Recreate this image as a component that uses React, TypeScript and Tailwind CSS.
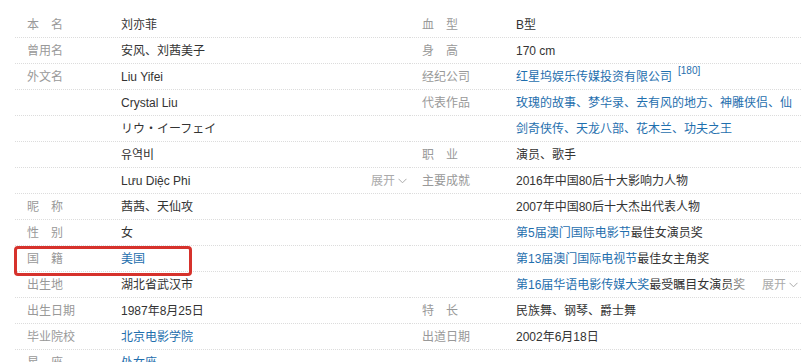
import React from 'react';

type Part = { text: string; link?: boolean };
type Row = { label?: string; value: Part[]; sup?: string; more?: boolean; boxed?: boolean };

const leftRows: Row[] = [
  { label: '本　名', value: [{ text: '刘亦菲' }] },
  { label: '曾用名', value: [{ text: '安风、刘茜美子' }] },
  { label: '外文名', value: [{ text: 'Liu Yifei' }] },
  { value: [{ text: 'Crystal Liu' }] },
  { value: [{ text: 'リウ・イーフェイ' }] },
  { value: [{ text: '유역비' }] },
  { value: [{ text: 'Lưu Diệc Phi' }], more: true },
  { label: '昵　称', value: [{ text: '茜茜、天仙攻' }] },
  { label: '性　别', value: [{ text: '女' }] },
  { label: '国　籍', value: [{ text: '美国', link: true }], boxed: true },
  { label: '出生地', value: [{ text: '湖北省武汉市' }] },
  { label: '出生日期', value: [{ text: '1987年8月25日' }] },
  { label: '毕业院校', value: [{ text: '北京电影学院', link: true }] },
  { label: '星　座', value: [{ text: '处女座', link: true }] },
];

const rightRows: Row[] = [
  { label: '血　型', value: [{ text: 'B型' }] },
  { label: '身　高', value: [{ text: '170 cm' }] },
  { label: '经纪公司', value: [{ text: '红星坞娱乐传媒投资有限公司', link: true }], sup: '[180]' },
  { label: '代表作品', value: [{ text: '玫瑰的故事、梦华录、去有风的地方、神雕侠侣、仙', link: true }] },
  { value: [{ text: '剑奇侠传、天龙八部、花木兰、功夫之王', link: true }] },
  { label: '职　业', value: [{ text: '演员、歌手' }] },
  { label: '主要成就', value: [{ text: '2016年中国80后十大影响力人物' }] },
  { value: [{ text: '2007年中国80后十大杰出代表人物' }] },
  { value: [{ text: '第5届澳门国际电影节', link: true }, { text: '最佳女演员奖' }] },
  { value: [{ text: '第13届澳门国际电视节', link: true }, { text: '最佳女主角奖' }] },
  { value: [{ text: '第16届华语电影传媒大奖', link: true }, { text: '最受瞩目女演员奖' }], more: true },
  { label: '特　长', value: [{ text: '民族舞、钢琴、爵士舞' }] },
  { label: '出道日期', value: [{ text: '2002年6月18日' }] },
];

const Chevron = () => (
  <svg width="9" height="6" viewBox="0 0 9 6" className="ml-[3px] mt-[1px]">
    <polyline points="0.5,0.8 4.5,4.8 8.5,0.8" fill="none" stroke="#aaa" strokeWidth="1" />
  </svg>
);

const InfoRow = ({ row }: { row: Row }) => (
  <div className="relative flex items-center h-[26px] border-b border-dotted border-[#dcdcdc] whitespace-nowrap">
    <div className="w-[106px] shrink-0 pl-[12px] text-[#999]">{row.label}</div>
    <div className="flex items-center text-[#333]">
      {row.value.map((p, i) => (
        <span key={i} className={p.link ? 'text-[#1f6fae]' : ''}>{p.text}</span>
      ))}
      {row.sup && <span className="relative -top-[6px] ml-[6px] text-[10px] text-[#1f6fae]">{row.sup}</span>}
    </div>
    {row.more && (
      <div className="absolute right-0 top-0 h-full flex items-center">
        <div className="h-full w-[36px] bg-gradient-to-r from-white/0 to-white" />
        <div className="h-full flex items-center bg-white pl-[2px] pr-[3px] text-[#aaa]">
          展开
          <Chevron />
        </div>
      </div>
    )}
    {row.boxed && (
      <div className="absolute -left-[1px] top-0 w-[178px] h-[30px] rounded-[4px] border-[3px] border-[#d6322c]" />
    )}
  </div>
);

export default function App() {
  return (
    <div
      className="w-[801px] h-[362px] overflow-hidden bg-white pt-[12px] pl-[15px] text-[12px] leading-none"
      style={{ fontFamily: '"Liberation Sans", "Noto Sans CJK SC", sans-serif' }}
    >
      <div className="flex">
        <div className="w-[395px] shrink-0 flex flex-col">
          {leftRows.map((r, i) => <InfoRow key={i} row={r} />)}
        </div>
        <div className="flex-1 flex flex-col">
          {rightRows.map((r, i) => <InfoRow key={i} row={r} />)}
        </div>
      </div>
    </div>
  );
}
